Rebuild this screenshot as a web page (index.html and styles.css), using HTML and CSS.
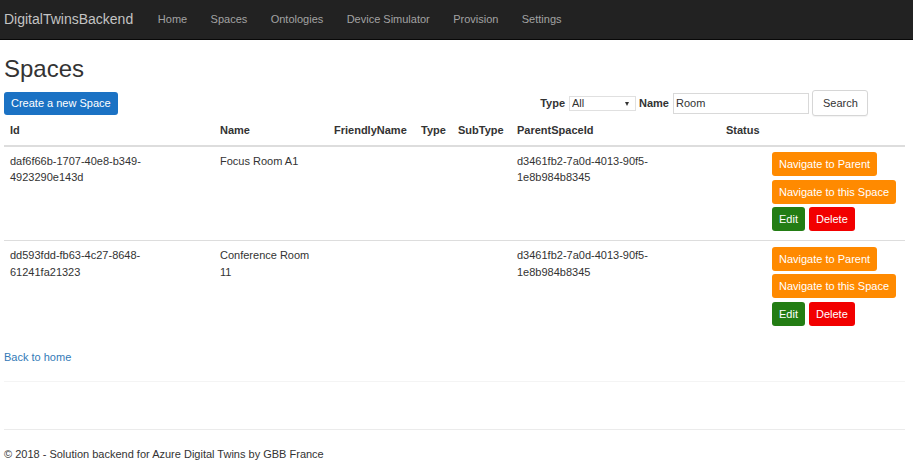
FILE: index.html
```html
<!DOCTYPE html>
<html lang="en">
<head>
<meta charset="utf-8">
<title>Spaces - DigitalTwinsBackend</title>
<link rel="stylesheet" href="styles.css">
</head>
<body>
<nav class="navbar">
  <a class="brand" href="#">DigitalTwinsBackend</a>
  <ul class="nav">
    <li><a href="#">Home</a></li>
    <li><a href="#">Spaces</a></li>
    <li><a href="#">Ontologies</a></li>
    <li><a href="#">Device Simulator</a></li>
    <li><a href="#">Provision</a></li>
    <li><a href="#">Settings</a></li>
  </ul>
</nav>
<div class="container">
  <h2 class="title">Spaces</h2>
  <div class="toolbar">
    <a class="btn btn-primary" href="#">Create a new Space</a>
    <form class="filter">
      <label class="lbl">Type</label>
      <span class="select-wrap"><select class="select"><option>All</option></select></span>
      <label class="lbl">Name</label>
      <input class="input" type="text" value="Room">
      <button class="btn btn-default" type="button">Search</button>
    </form>
  </div>
  <table class="table">
    <thead>
      <tr>
        <th class="c-id">Id</th>
        <th class="c-name">Name</th>
        <th class="c-friendly">FriendlyName</th>
        <th class="c-type">Type</th>
        <th class="c-sub">SubType</th>
        <th class="c-parent">ParentSpaceId</th>
        <th class="c-status">Status</th>
        <th class="c-actions"></th>
      </tr>
    </thead>
    <tbody>
      <tr>
        <td>daf6f66b-1707-40e8-b349-4923290e143d</td>
        <td>Focus Room A1</td>
        <td></td>
        <td></td>
        <td></td>
        <td>d3461fb2-7a0d-4013-90f5-1e8b984b8345</td>
        <td></td>
        <td>
          <div class="actions">
            <a class="btn btn-orange" href="#">Navigate to Parent</a>
            <a class="btn btn-orange" href="#">Navigate to this Space</a>
            <a class="btn btn-green" href="#">Edit</a>
            <a class="btn btn-red" href="#">Delete</a>
          </div>
        </td>
      </tr>
      <tr>
        <td>dd593fdd-fb63-4c27-8648-61241fa21323</td>
        <td>Conference Room 11</td>
        <td></td>
        <td></td>
        <td></td>
        <td>d3461fb2-7a0d-4013-90f5-1e8b984b8345</td>
        <td></td>
        <td>
          <div class="actions">
            <a class="btn btn-orange" href="#">Navigate to Parent</a>
            <a class="btn btn-orange" href="#">Navigate to this Space</a>
            <a class="btn btn-green" href="#">Edit</a>
            <a class="btn btn-red" href="#">Delete</a>
          </div>
        </td>
      </tr>
    </tbody>
  </table>
  <div class="back"><a href="#">Back to home</a></div>
  <hr class="hr-faint">
  <hr class="hr-main">
  <footer class="footer">© 2018 - Solution backend for Azure Digital Twins by GBB France</footer>
</div>
</body>
</html>
```
FILE: styles.css
```css
* { box-sizing: border-box; }
html, body { margin: 0; padding: 0; background: #fff; }
body {
  font-family: "Liberation Sans", Arial, Helvetica, sans-serif;
  font-size: 11px;
  line-height: 1.5;
  color: #333;
}
a { text-decoration: none; }

.navbar {
  display: flex;
  align-items: center;
  height: 40px;
  background: #222;
  border-bottom: 1px solid #080808;
}
.brand {
  color: #c4c4c4;
  font-size: 14px;
  padding: 0 13px 0 4px;
}
.nav { display: flex; list-style: none; margin: 0; padding: 0; }
.nav a { display: block; color: #a2a2a2; padding: 0 11.7px; }

.container { padding: 0 8px 0 4px; }

.title {
  font-size: 24px;
  font-weight: normal;
  line-height: 26px;
  margin: 16px 0 8px;
  color: #333;
}

.toolbar {
  display: flex;
  justify-content: space-between;
  align-items: center;
  height: 26px;
}
.btn {
  display: inline-block;
  font-family: inherit;
  font-size: 11px;
  line-height: 16px;
  padding: 4px 7px;
  border: 0;
  border-radius: 3px;
  color: #fff;
  white-space: nowrap;
  cursor: pointer;
}
.btn-primary { background: #1b72c4; line-height: 15px; }
.btn-default {
  background: #fff;
  color: #333;
  border: 1px solid #d6d6d6;
  padding: 4px 10px;
  width: 56px;
  height: 26px;
  line-height: 16px;
  text-align: center;
  box-shadow: 0 1px 1px rgba(0,0,0,0.05);
}
.btn-orange { background: #ff8a00; }
.btn-green { background: #237d14; }
.btn-red { background: #f20000; }

.filter {
  display: flex;
  align-items: center;
  margin: 0 37px 0 0;
}
.lbl { font-weight: bold; margin-right: 4px; }
.select-wrap { position: relative; display: inline-block; margin-right: 3px; }
.select-wrap::after {
  content: "";
  position: absolute;
  right: 7px;
  top: 6px;
  border-left: 2.5px solid transparent;
  border-right: 2.5px solid transparent;
  border-top: 4px solid #333;
  pointer-events: none;
}
.select {
  appearance: none;
  -webkit-appearance: none;
  width: 67px;
  height: 15px;
  border: 1px solid #e0e0e0;
  border-radius: 0;
  background: #fff;
  font-family: inherit;
  font-size: 11px;
  line-height: 13px;
  padding: 0 2px;
  color: #333;
  display: block;
}
.input {
  width: 136px;
  height: 21px;
  border: 1px solid #d9d9d9;
  padding: 0 2px;
  margin-right: 3px;
  font-family: inherit;
  font-size: 11px;
  color: #333;
}

.table {
  width: 901px;
  table-layout: fixed;
  border-collapse: collapse;
  margin: 1px 0 14px;
}
.table th, .table td {
  text-align: left;
  vertical-align: top;
}
.table th { font-weight: bold; padding: 5px 6px 6px; border-bottom: 2px solid #ddd; }
.table td { padding: 5.5px 6px 9px; border-top: 1px solid #ddd; }
.table td:not(:last-child) { padding-top: 6px; }
.table tbody tr:first-child td { border-top: 0; }
.c-id { width: 210px; }
.c-name { width: 114px; }
.c-friendly { width: 87px; }
.c-type { width: 37px; }
.c-sub { width: 59px; }
.c-parent { width: 209px; }
.c-status { width: 46px; }
.c-actions { width: 139px; }
.actions { display: flex; flex-wrap: wrap; row-gap: 3.5px; column-gap: 4px; }

.back a { color: #337ab7; }
.hr-faint { border: 0; border-top: 1px solid #f4f4f4; margin: 16px 0 0; }
.hr-main { border: 0; border-top: 1px solid #ebebeb; margin: 47px 0 0; }
.footer { margin-top: 16px; }
```
